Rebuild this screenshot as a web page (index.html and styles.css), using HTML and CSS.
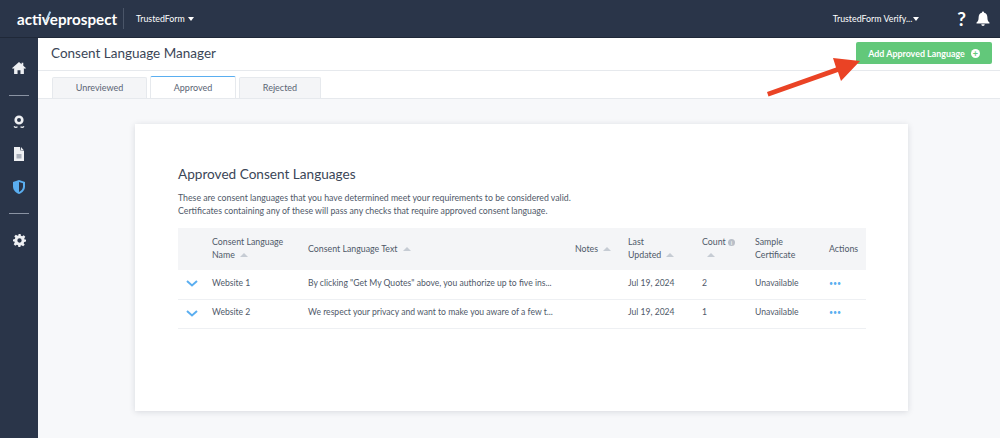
FILE: index.html
```html
<!DOCTYPE html>
<html lang="en">
<head>
  <meta charset="UTF-8">
  <meta name="viewport" content="width=device-width, initial-scale=1.0">
  <title>Consent Language Manager</title>
  <link rel="stylesheet" href="styles.css">
</head>
<body>
  <header class="topbar">
    <div class="logo">acti<span class="logo-v">v</span>eprospect</div>
    <div class="product">TrustedForm <span class="caret"></span></div>
    <div class="account">TrustedForm Verify...<span class="caret"></span></div>
    <div class="help">?</div>
    <svg class="bell" width="14" height="16" viewBox="0 0 16 17"><path fill="#fff" d="M8 0a1.300 1.300 0 0 0-1.300 1.400C4.300 2 3 4 3 6.400c0 3.600-1 4.900-2.400 6.100v1h14.800v-1C14 11.300 13 10 13 6.400c0-2.400-1.300-4.400-3.700-5A1.300 1.300 0 0 0 8 0zM6 14.500a2 2 0 0 0 4 0z"/></svg>
  </header>

  <div class="layout">
    <nav class="sidebar">
      <svg class="nav-icon nav-home" width="14" height="12" viewBox="0 0 16 14"><path fill="#eef0f3" d="M8 0 0 7l1 1.200L2.300 7.100V14h4V9.500h3.400V14h4V7.100L15 8.200 16 7l-3-2.600V1h-2v1.700z"/></svg>
      <div class="nav-rule"></div>
      <svg class="nav-icon nav-award" width="12" height="14" viewBox="0 0 12 14"><circle cx="6" cy="5" r="3.300" fill="none" stroke="#eef0f3" stroke-width="2.600"/><path fill="none" stroke="#eef0f3" stroke-width="1.300" d="M1 11.300c1 1.200 2.200 1.300 3.500.5M11 11.300c-1 1.200-2.200 1.300-3.500.5"/></svg>
      <svg class="nav-icon" width="10" height="14" viewBox="0 0 10 14"><path fill="#eef0f3" d="M0 0h6l.5 3.500L10 4v10H0z"/><path fill="#eef0f3" d="M7 0l3 3.400H7z"/><path fill="#a9afba" d="M2.500 7h5v4.500h-5z"/></svg>
      <svg class="nav-icon" width="12" height="14" viewBox="0 0 12 14"><path fill="#5aaef0" d="M6 0 0 2v4.500C0 10 2.500 12.700 6 14c3.500-1.300 6-4 6-7.500V2z"/><path fill="#2a3549" d="M6 2v10c2.300-1 4-3 4-5.500V3.300z"/></svg>
      <div class="nav-rule nav-rule-low"></div>
      <svg class="nav-icon" width="13" height="13" viewBox="0 0 24 24"><path fill="#eef0f3" d="M10 0h4l.6 3.300 2.300 1 2.800-1.900 2.900 2.900-1.900 2.800 1 2.300L24 10v4l-3.300.6-1 2.300 1.900 2.800-2.900 2.900-2.800-1.900-2.300 1L13.900 24h-4l-.6-3.300-2.300-1-2.800 1.900-2.900-2.900 1.900-2.800-1-2.300L0 14v-4l3.300-.6 1-2.300-1.900-2.800 2.900-2.900 2.800 1.900 2.300-1zM12 8a4 4 0 1 0 0 8 4 4 0 0 0 0-8z"/></svg>
    </nav>

    <main class="main">
      <div class="page-head">
        <h1>Consent Language Manager</h1>
        <button class="add-btn">Add Approved Language <span class="plus">+</span></button>
      </div>
      <div class="tabs">
        <div class="tab tab-unreviewed">Unreviewed</div>
        <div class="tab tab-approved active">Approved</div>
        <div class="tab tab-rejected">Rejected</div>
      </div>
      <div class="content">
        <section class="card">
          <h2>Approved Consent Languages</h2>
          <p class="intro">These are consent languages that you have determined meet your requirements to be considered valid.<br>Certificates containing any of these will pass any checks that require approved consent language.</p>
          <table>
            <colgroup>
              <col class="c-toggle"><col class="c-name"><col class="c-text"><col class="c-notes"><col class="c-updated"><col class="c-count"><col class="c-sample"><col class="c-actions">
            </colgroup>
            <thead>
              <tr>
                <th></th>
                <th>Consent Language<br>Name <span class="sort"></span></th>
                <th>Consent Language Text <span class="sort"></span></th>
                <th>Notes <span class="sort"></span></th>
                <th>Last<br>Updated <span class="sort"></span></th>
                <th>Count <span class="info">i</span><br><span class="sort sort-alone"></span></th>
                <th>Sample<br>Certificate</th>
                <th>Actions</th>
              </tr>
            </thead>
            <tbody>
              <tr>
                <td><svg width="12" height="7" viewBox="0 0 12 7"><path fill="none" stroke="#5aaef0" stroke-width="2" d="M1 1l5 4.500L11 1"/></svg></td>
                <td>Website 1</td>
                <td>By clicking "Get My Quotes" above, you authorize up to five ins...</td>
                <td></td>
                <td>Jul 19, 2024</td>
                <td>2</td>
                <td>Unavailable</td>
                <td class="dots">•••</td>
              </tr>
              <tr>
                <td><svg width="12" height="7" viewBox="0 0 12 7"><path fill="none" stroke="#5aaef0" stroke-width="2" d="M1 1l5 4.500L11 1"/></svg></td>
                <td>Website 2</td>
                <td>We respect your privacy and want to make you aware of a few t...</td>
                <td></td>
                <td>Jul 19, 2024</td>
                <td>1</td>
                <td>Unavailable</td>
                <td class="dots">•••</td>
              </tr>
            </tbody>
          </table>
        </section>
      </div>
    </main>
  </div>

  <svg class="arrow" width="100" height="48" viewBox="0 0 100 48"><path fill="#ea4325" d="M1 41 70 16.500 67 7 94 10 75 30 72 21 2.500 45.500z"/></svg>
</body>
</html>
```

FILE: styles.css
```css
html, body {
  height: 100%;
}
body {
  margin: 0;
  font-family: "Lato", "Open Sans", sans-serif;
  color: #3b4657;
  background: #f7f8fa;
  overflow: hidden;
  position: relative;
}
.topbar {
  height: 37px;
  background: #2a3549;
  color: #fff;
  display: flex;
  align-items: center;
  border-bottom: 1px solid #1f2838;
}
.logo {
  margin-left: 17px;
  width: 106px;
  font-size: 15.200px;
  font-weight: 700;
  white-space: nowrap;
}
.logo-v {
  position: relative;
}
.logo-v::after {
  content: "";
  position: absolute;
  left: 5px;
  top: 1px;
  width: 1.500px;
  height: 11px;
  background: #a9d4f5;
  transform: rotate(25deg);
}
.product {
  border-left: 1px solid #4a5568;
  padding: 5px 0 5px 12px;
  font-size: 8.800px;
  flex: 1;
}
.caret {
  display: inline-block;
  width: 0;
  height: 0;
  border-left: 3.500px solid transparent;
  border-right: 3.500px solid transparent;
  border-top: 4px solid #fff;
  margin-left: 1px;
  vertical-align: 1px;
}
.account {
  font-size: 8.800px;
  margin-right: 38px;
}
.help {
  font-size: 19px;
  font-weight: 700;
  margin-right: 10px;
}
.bell {
  margin-right: 10px;
}
.layout {
  display: flex;
  height: 400px;
}
.sidebar {
  width: 38px;
  background: #2a3549;
  display: flex;
  flex-direction: column;
  align-items: center;
  flex-shrink: 0;
}
.nav-icon {
  display: block;
  margin-bottom: 19px;
}
.nav-home {
  margin-top: 24px;
  margin-bottom: 21px;
}
.nav-award {
  margin-bottom: 18px;
}
.nav-rule {
  width: 20px;
  height: 1px;
  background: #8a93a3;
  margin-bottom: 19px;
}
.nav-rule-low {
  margin-bottom: 20px;
}
.main {
  flex: 1;
  display: flex;
  flex-direction: column;
}
.page-head {
  height: 30px;
  background: #fff;
  border-bottom: 1px solid #e6e9ed;
  display: flex;
  align-items: center;
  justify-content: space-between;
  padding: 0 8px 2px 13px;
}
h1 {
  margin: 0;
  font-size: 13.500px;
  font-weight: 400;
  color: #3b4657;
}
.add-btn {
  width: 136px;
  height: 22px;
  background: #62c87a;
  color: #fff;
  border: none;
  border-radius: 2px;
  font-family: inherit;
  font-size: 8.900px;
  font-weight: 700;
  display: flex;
  align-items: center;
  justify-content: center;
  gap: 6px;
  padding: 0;
}
.plus {
  width: 9px;
  height: 9px;
  border-radius: 50%;
  background: #fff;
  color: #62c87a;
  font-size: 9px;
  line-height: 9px;
  text-align: center;
}
.tabs {
  background: #fff;
  border-bottom: 1px solid #e6e9ed;
  display: flex;
  padding: 6px 0 0 14px;
  height: 21px;
}
.tab {
  height: 21px;
  background: #f4f5f7;
  border: 1px solid #e6e9ed;
  border-bottom: none;
  border-radius: 2px 2px 0 0;
  font-size: 9px;
  color: #5a6474;
  display: flex;
  align-items: center;
  justify-content: center;
  margin-right: 3px;
  padding-bottom: 1px;
  box-sizing: border-box;
}
.tab-unreviewed { width: 95px; }
.tab-approved { width: 86px; }
.tab-rejected { width: 82px; }
.tab.active {
  background: #fff;
  border-top: 1px solid #5aaef0;
  height: 22px;
  margin-top: -1px;
}
.content {
  flex: 1;
  padding: 25px 92px 27px 97px;
}
.card {
  height: 287px;
  box-sizing: border-box;
  background: #fff;
  box-shadow: 0 1px 6px rgba(40, 50, 70, 0.15);
  padding: 41px 42px 0 43px;
}
h2 {
  margin: 0;
  font-size: 13.600px;
  line-height: 18px;
  font-weight: 400;
  color: #3b4657;
}
.intro {
  margin: 8px 0 11px;
  font-size: 8.750px;
  line-height: 13px;
  color: #4f5969;
}
table {
  width: 688px;
  border-collapse: collapse;
  table-layout: fixed;
  font-size: 8.800px;
  color: #4f5969;
}
.c-toggle { width: 34px; }
.c-name { width: 96px; }
.c-text { width: 267px; }
.c-notes { width: 53px; }
.c-updated { width: 74px; }
.c-count { width: 53px; }
.c-sample { width: 74px; }
.c-actions { width: 37px; }
thead tr {
  background: #f4f5f7;
  height: 42px;
}
th {
  font-weight: 400;
  text-align: left;
  line-height: 13px;
  padding: 0 0 2px;
}
tbody tr {
  height: 29px;
  border-bottom: 1px solid #eef0f3;
}
td {
  padding: 0 0 3px;
  font-size: 8.600px;
  white-space: nowrap;
}
td:first-child {
  padding: 0 0 0 8px;
}
.sort {
  display: inline-block;
  width: 0;
  height: 0;
  border-left: 4px solid transparent;
  border-right: 4px solid transparent;
  border-bottom: 4px solid #c6ccd4;
  margin-left: 3px;
  vertical-align: 1px;
}
.sort-alone {
  margin-left: 5px;
}
.info {
  display: inline-block;
  width: 7px;
  height: 7px;
  border-radius: 50%;
  background: #b9bfc8;
  color: #fff;
  font-size: 6px;
  line-height: 7px;
  text-align: center;
}
td.dots {
  color: #5aaef0;
  font-size: 7px;
}
.arrow {
  position: absolute;
  left: 766px;
  top: 51px;
}
```
